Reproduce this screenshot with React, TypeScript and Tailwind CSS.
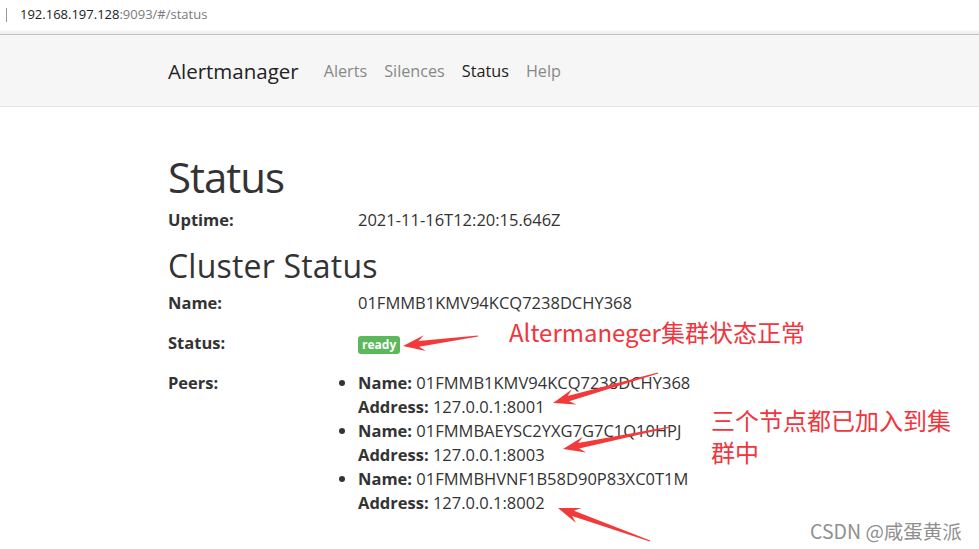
import React from 'react';

type Pt = [number, number];

// red hand-drawn annotation arrows: tail -> tip
const arrows: { from: Pt; to: Pt }[] = [
  { from: [478, 336], to: [403, 346] },
  { from: [658, 373], to: [553, 403] },
  { from: [670, 427], to: [563, 449] },
  { from: [650, 541], to: [558, 508] },
];

const arrowPoints = ({ from, to }: { from: Pt; to: Pt }) => {
  const [sx, sy] = from;
  const [tx, ty] = to;
  const L = Math.hypot(tx - sx, ty - sy);
  const ux = (tx - sx) / L;
  const uy = (ty - sy) / L;
  const nx = -uy;
  const ny = ux;
  const p = (bx: number, by: number, back: number, side: number) =>
    `${(bx - ux * back + nx * side).toFixed(1)},${(by - uy * back + ny * side).toFixed(1)}`;
  return [
    p(tx, ty, 0, 0),
    p(tx, ty, 22, 8),
    p(tx, ty, 16, 2.8),
    p(sx, sy, 0, 0.6),
    p(sx, sy, 0, -0.6),
    p(tx, ty, 16, -2.8),
    p(tx, ty, 22, -8),
  ].join(' ');
};

const peers = [
  { name: '01FMMB1KMV94KCQ7238DCHY368', address: '127.0.0.1:8001' },
  { name: '01FMMBAEYSC2YXG7G7C1Q10HPJ', address: '127.0.0.1:8003' },
  { name: '01FMMBHVNF1B58D90P83XC0T1M', address: '127.0.0.1:8002' },
];

const Row: React.FC<{ label: string; className?: string; children: React.ReactNode }> = ({ label, className, children }) => (
  <div className={`flex leading-6 ${className ?? ''}`}>
    <div className="w-[190px] shrink-0 font-bold">{label}</div>
    <div>{children}</div>
  </div>
);

const App: React.FC = () => {
  return (
    <div
      className="relative h-[549px] w-[979px] overflow-hidden bg-white text-[#333]"
      style={{ fontFamily: '"Open Sans", "Noto Sans", sans-serif' }}
    >
      {/* browser address bar */}
      <div className="flex h-[30px] items-center bg-white">
        <div className="ml-[6px] h-[14px] w-px bg-[#9a9a9a]" />
        <div className="ml-[13px] text-[13px]">
          <span className="text-[#202020]">192.168.197.128</span>
          <span className="text-[#7a7a7a]">:9093/#/status</span>
        </div>
      </div>
      <div className="h-[4px] bg-gradient-to-b from-[#fbfbfb] to-[#ececec]" />
      <div className="h-px bg-[#c4c4c4]" />

      {/* navbar */}
      <nav className="flex h-[72px] items-center border-b border-[#e4e4e4] bg-[#f6f6f6] pl-[168px] pt-[2px]">
        <span className="text-[20.5px] text-[#222]">Alertmanager</span>
        <div className="ml-[25px] flex gap-[17px] text-[16.2px] text-[#888]">
          <span>Alerts</span>
          <span>Silences</span>
          <span className="text-[#222]">Status</span>
          <span>Help</span>
        </div>
      </nav>

      {/* content */}
      <main className="pl-[168px] text-[16.5px]">
        <h1 className="mt-[49px] text-[42px] leading-none tracking-[-1px]">Status</h1>
        <Row label="Uptime:" className="mt-[10px]">2021-11-16T12:20:15.646Z</Row>

        <h2 className="mt-[18px] text-[32px] leading-none tracking-[0.2px]">Cluster Status</h2>
        <Row label="Name:" className="mt-[9px]">01FMMB1KMV94KCQ7238DCHY368</Row>
        <Row label="Status:" className="mt-[16px]">
          <span className="inline-block rounded-[3px] bg-[#5cb85c] px-[4px] text-[12px] font-bold leading-[18px] text-white">
            ready
          </span>
        </Row>
        <Row label="Peers:" className="mt-[16px]">
          <ul className="list-disc">
            {peers.map((p) => (
              <li key={p.address}>
                <div>
                  <span className="font-bold">Name:</span> {p.name}
                </div>
                <div>
                  <span className="font-bold">Address:</span> {p.address}
                </div>
              </li>
            ))}
          </ul>
        </Row>
      </main>

      {/* annotations */}
      <svg className="pointer-events-none absolute left-0 top-0" width={979} height={549}>
        {arrows.map((a, i) => (
          <polygon key={i} points={arrowPoints(a)} fill="#f23a3a" />
        ))}
      </svg>
      <div
        className="absolute left-[509px] top-[316px] text-[24px] leading-8 text-[#f2353c]"
        style={{ fontFamily: '"Noto Sans CJK SC", sans-serif' }}
      >
        Altermaneger集群状态正常
      </div>
      <div
        className="absolute left-[711px] top-[404px] text-[24px] leading-8 text-[#f2353c]"
        style={{ fontFamily: '"Noto Sans CJK SC", sans-serif' }}
      >
        三个节点都已加入到集
        <br />
        群中
      </div>
      <div
        className="absolute left-[810px] top-[520px] text-[19.5px] leading-[22px] text-[#8f8f8f]"
        style={{ fontFamily: '"Noto Sans CJK SC", sans-serif', textShadow: '0 0 2px #fff' }}
      >
        CSDN @咸蛋黄派
      </div>
    </div>
  );
};

export default App;
